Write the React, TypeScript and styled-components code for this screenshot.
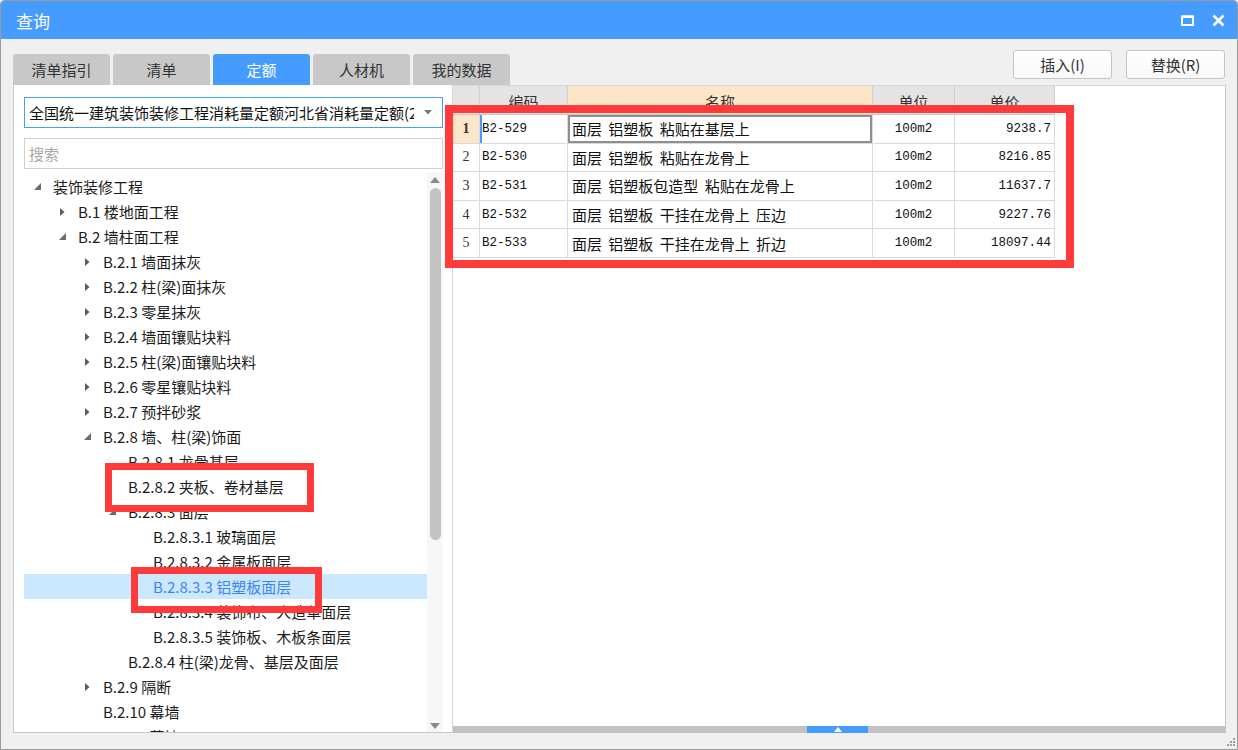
import React from "react";
import styled, { createGlobalStyle } from "styled-components";

const GlobalStyle = createGlobalStyle`
  html, body { margin: 0; padding: 0; background: #fff; }
  body { font-family: "Noto Sans CJK SC", "Liberation Sans", sans-serif; }
  * { box-sizing: border-box; }
`;

const BLUE = "#469bff";
const CJK = `"Noto Sans CJK SC", "Liberation Sans", sans-serif`;

const Window = styled.div`
  position: relative;
  width: 1238px;
  height: 750px;
  background: #f0f0f0;
  border: 1px solid #9a9a9a;
  border-radius: 4px 4px 0 0;
  display: flex;
  flex-direction: column;
  overflow: hidden;
  font-family: ${CJK};
`;

const TitleBar = styled.div`
  height: 38px;
  flex-shrink: 0;
  background: ${BLUE};
  color: #fff;
  display: flex;
  align-items: center;
  padding: 0 10px 0 15px;
  font-size: 17px;
`;

const TitleText = styled.div`
  flex: 1;
`;

const TitleIcons = styled.div`
  display: flex;
  align-items: center;
  gap: 18px;
  margin-right: 2px;
`;

const Toolbar = styled.div`
  height: 46px;
  flex-shrink: 0;
  display: flex;
  padding: 0 12px;
`;

const Tabs = styled.div`
  display: flex;
  align-items: flex-end;
  gap: 3px;
  flex: 1;
`;

const Tab = styled.div<{ $active?: boolean }>`
  width: 97px;
  height: 31px;
  border-radius: 3px 3px 0 0;
  background: ${(p) => (p.$active ? BLUE : "#c8c8c8")};
  color: ${(p) => (p.$active ? "#fff" : "#333")};
  font-size: 15px;
  display: flex;
  align-items: center;
  justify-content: center;
`;

const Buttons = styled.div`
  display: flex;
  gap: 14px;
  padding-top: 11px;
`;

const Button = styled.div`
  width: 99px;
  height: 29px;
  border: 1px solid #c4c4c4;
  border-radius: 3px;
  background: linear-gradient(#ffffff, #f8f8f8);
  font-size: 15px;
  color: #333;
  display: flex;
  align-items: center;
  justify-content: center;
`;

const Main = styled.div`
  height: 648px;
  flex-shrink: 0;
  display: flex;
  padding-left: 12px;
  padding-right: 11px;
`;

const LeftPanel = styled.div`
  width: 440px;
  background: #fff;
  border-left: 1px solid #c8c8c8;
  border-bottom: 1px solid #c8c8c8;
  border-right: 1px solid #d6d6d6;
  padding: 12px 9px 0 10px;
  display: flex;
  flex-direction: column;
`;

const Combo = styled.div`
  height: 31px;
  border: 1px solid ${BLUE};
  display: flex;
  align-items: center;
  padding: 0 6px 0 4px;
  font-size: 15px;
  color: #111;
`;

const ComboText = styled.div`
  flex: 1;
  white-space: nowrap;
  overflow: hidden;
`;

const ComboArrow = styled.div`
  width: 16px;
  display: flex;
  justify-content: center;
  margin-left: 6px;
`;

const Search = styled.div`
  height: 31px;
  margin-top: 10px;
  border: 1px solid #cfcfcf;
  display: flex;
  align-items: center;
  padding-left: 4px;
  font-size: 15px;
  color: #a8a8a8;
`;

const TreeWrap = styled.div`
  flex: 1;
  margin-top: 3px;
  display: flex;
  min-height: 0;
`;

const Tree = styled.div`
  flex: 1;
  padding-top: 2px;
  overflow: hidden;
`;

const TreeRow = styled.div<{ $level: number; $selected?: boolean }>`
  height: 25px;
  display: flex;
  align-items: center;
  padding-left: ${(p) => 6 + p.$level * 25}px;
  background: ${(p) => (p.$selected ? "#cce8ff" : "transparent")};
  color: ${(p) => (p.$selected ? "#3a86f0" : "#1c1c1c")};
  font-size: 15px;
  white-space: nowrap;
`;

const Arrow = styled.div`
  width: 14px;
  height: 25px;
  margin-right: 9px;
  display: flex;
  align-items: center;
  justify-content: center;
`;

const VScroll = styled.div`
  width: 16px;
  background: #f7f7f7;
  display: flex;
  flex-direction: column;
  align-items: center;
  padding: 5px 0 3px;
`;

const VThumb = styled.div`
  width: 11px;
  height: 352px;
  margin-top: 5px;
  border-radius: 6px;
  background: #c3c3c3;
`;

const ScrollSpacer = styled.div`
  flex: 1;
`;

const RightPanel = styled.div`
  flex: 1;
  background: #fff;
  border-top: 1px solid #d6d6d6;
  border-right: 1px solid #c8c8c8;
  display: flex;
  flex-direction: column;
`;

const GridArea = styled.div`
  flex: 1;
`;

const Grid = styled.div`
  display: grid;
  grid-template-columns: 27px 88px 305px 82px 100px;
  grid-template-rows: 29px;
  grid-auto-rows: 28.6px;
  width: 602px;
`;

const HeadCell = styled.div<{ $hot?: boolean }>`
  background: ${(p) => (p.$hot ? "#fde6c8" : "#e4e4e4")};
  border-right: 1px solid #d0d0d0;
  border-bottom: 1px solid #c6c6c6;
  display: flex;
  align-items: center;
  justify-content: center;
  font-size: 15px;
  color: #333;
  padding-top: 2px;
`;

const Cell = styled.div<{ $align?: "left" | "center" | "right" }>`
  border-right: 1px solid #dadada;
  border-bottom: 1px solid #dadada;
  display: flex;
  align-items: center;
  justify-content: ${(p) =>
    p.$align === "right" ? "flex-end" : p.$align === "center" ? "center" : "flex-start"};
  padding: 0 3px 0 3px;
  white-space: nowrap;
  overflow: hidden;
`;

const NumCell = styled(Cell)<{ $current?: boolean }>`
  justify-content: center;
  background: ${(p) => (p.$current ? "#fde6c8" : "#fff")};
  font-family: "Liberation Serif", serif;
  font-size: 14px;
  font-weight: ${(p) => (p.$current ? 700 : 400)};
  color: #333;
`;

const CodeCell = styled(Cell)<{ $cursor?: boolean }>`
  font-family: "Liberation Mono", monospace;
  font-size: 12.5px;
  color: #111;
  padding-left: 2px;
  box-shadow: ${(p) => (p.$cursor ? `inset 2px 0 0 ${BLUE}` : "none")};
`;

const NameCell = styled(Cell)<{ $focus?: boolean }>`
  font-size: 15px;
  color: #111;
  word-spacing: 3px;
  padding-left: 4px;
  box-shadow: ${(p) => (p.$focus ? "inset 0 0 0 2px #8f8f8f" : "none")};
`;

const MonoCell = styled(Cell)`
  font-family: "Liberation Mono", monospace;
  font-size: 12.5px;
  color: #111;
`;

const HScroll = styled.div`
  height: 7px;
  background: #c2c2c2;
  position: relative;
  display: flex;
  flex-shrink: 0;
`;

const HThumb = styled.div`
  width: 61px;
  margin-left: 354px;
  background: ${BLUE};
  display: flex;
  align-items: center;
  justify-content: center;
`;

const BottomBar = styled.div`
  flex: 1;
  display: flex;
  justify-content: flex-end;
  align-items: flex-end;
  padding: 0 1px 2px 0;
`;

const Mark = styled.div<{ $w?: number }>`
  position: absolute;
  border: ${(p) => p.$w ?? 7}px solid #ff3a3a;
  pointer-events: none;
`;

type Node = { level: number; label: string; arrow?: "open" | "closed"; selected?: boolean };

const tree: Node[] = [
  { level: 0, label: "装饰装修工程", arrow: "open" },
  { level: 1, label: "B.1 楼地面工程", arrow: "closed" },
  { level: 1, label: "B.2 墙柱面工程", arrow: "open" },
  { level: 2, label: "B.2.1 墙面抹灰", arrow: "closed" },
  { level: 2, label: "B.2.2 柱(梁)面抹灰", arrow: "closed" },
  { level: 2, label: "B.2.3 零星抹灰", arrow: "closed" },
  { level: 2, label: "B.2.4 墙面镶贴块料", arrow: "closed" },
  { level: 2, label: "B.2.5 柱(梁)面镶贴块料", arrow: "closed" },
  { level: 2, label: "B.2.6 零星镶贴块料", arrow: "closed" },
  { level: 2, label: "B.2.7 预拌砂浆", arrow: "closed" },
  { level: 2, label: "B.2.8 墙、柱(梁)饰面", arrow: "open" },
  { level: 3, label: "B.2.8.1 龙骨基层" },
  { level: 3, label: "B.2.8.2 夹板、卷材基层" },
  { level: 3, label: "B.2.8.3 面层", arrow: "open" },
  { level: 4, label: "B.2.8.3.1 玻璃面层" },
  { level: 4, label: "B.2.8.3.2 金属板面层" },
  { level: 4, label: "B.2.8.3.3 铝塑板面层", selected: true },
  { level: 4, label: "B.2.8.3.4 装饰布、人造革面层" },
  { level: 4, label: "B.2.8.3.5 装饰板、木板条面层" },
  { level: 3, label: "B.2.8.4 柱(梁)龙骨、基层及面层" },
  { level: 2, label: "B.2.9 隔断", arrow: "closed" },
  { level: 2, label: "B.2.10 幕墙" },
  { level: 2, label: "B.2.11 幕墙" },
];

const rows = [
  { code: "B2-529", name: "面层 铝塑板 粘贴在基层上", unit: "100m2", price: "9238.7" },
  { code: "B2-530", name: "面层 铝塑板 粘贴在龙骨上", unit: "100m2", price: "8216.85" },
  { code: "B2-531", name: "面层 铝塑板包造型 粘贴在龙骨上", unit: "100m2", price: "11637.7" },
  { code: "B2-532", name: "面层 铝塑板 干挂在龙骨上 压边", unit: "100m2", price: "9227.76" },
  { code: "B2-533", name: "面层 铝塑板 干挂在龙骨上 折边", unit: "100m2", price: "18097.44" },
];

function TreeArrow({ kind }: { kind?: "open" | "closed" }) {
  if (kind === "closed")
    return (
      <svg width="8" height="10" viewBox="0 0 8 10">
        <polygon points="2,1 6.5,5 2,9" fill="#5c5c5c" />
      </svg>
    );
  if (kind === "open")
    return (
      <svg width="9" height="9" viewBox="0 0 9 9">
        <polygon points="8,1 8,8 1,8" fill="#6a6a6a" />
      </svg>
    );
  return null;
}

export default function App() {
  return (
    <>
      <GlobalStyle />
      <Window>
        <TitleBar>
          <TitleText>查询</TitleText>
          <TitleIcons>
            <svg width="13" height="11" viewBox="0 0 13 11">
              <rect x="1" y="1.5" width="11" height="8.5" fill="none" stroke="#fff" strokeWidth="2" />
              <rect x="1" y="0.5" width="11" height="2.5" fill="#fff" />
            </svg>
            <svg width="13" height="13" viewBox="0 0 13 13">
              <path d="M1.5 1.5 L11.5 11.5 M11.5 1.5 L1.5 11.5" stroke="#fff" strokeWidth="2.6" />
            </svg>
          </TitleIcons>
        </TitleBar>

        <Toolbar>
          <Tabs>
            <Tab>清单指引</Tab>
            <Tab>清单</Tab>
            <Tab $active>定额</Tab>
            <Tab>人材机</Tab>
            <Tab>我的数据</Tab>
          </Tabs>
          <Buttons>
            <Button>插入(I)</Button>
            <Button>替换(R)</Button>
          </Buttons>
        </Toolbar>

        <Main>
          <LeftPanel>
            <Combo>
              <ComboText>全国统一建筑装饰装修工程消耗量定额河北省消耗量定额(2018)</ComboText>
              <ComboArrow>
                <svg width="8" height="5" viewBox="0 0 8 5">
                  <polygon points="0,0 8,0 4,4.5" fill="#777" />
                </svg>
              </ComboArrow>
            </Combo>
            <Search>搜索</Search>
            <TreeWrap>
              <Tree>
                {tree.map((n, i) => (
                  <TreeRow key={i} $level={n.level} $selected={n.selected}>
                    <Arrow>
                      <TreeArrow kind={n.arrow} />
                    </Arrow>
                    {n.label}
                  </TreeRow>
                ))}
              </Tree>
              <VScroll>
                <svg width="10" height="6" viewBox="0 0 10 6">
                  <polygon points="0,6 10,6 5,0" fill="#8a8a8a" />
                </svg>
                <VThumb />
                <ScrollSpacer />
                <svg width="10" height="6" viewBox="0 0 10 6">
                  <polygon points="0,0 10,0 5,6" fill="#8a8a8a" />
                </svg>
              </VScroll>
            </TreeWrap>
          </LeftPanel>

          <RightPanel>
            <GridArea>
              <Grid>
                <HeadCell />
                <HeadCell>编码</HeadCell>
                <HeadCell $hot>名称</HeadCell>
                <HeadCell>单位</HeadCell>
                <HeadCell>单价</HeadCell>
                {rows.map((r, i) => (
                  <React.Fragment key={r.code}>
                    <NumCell $current={i === 0}>{i + 1}</NumCell>
                    <CodeCell $cursor={i === 0}>{r.code}</CodeCell>
                    <NameCell $focus={i === 0}>{r.name}</NameCell>
                    <MonoCell $align="center">{r.unit}</MonoCell>
                    <MonoCell $align="right">{r.price}</MonoCell>
                  </React.Fragment>
                ))}
              </Grid>
            </GridArea>
            <HScroll>
              <HThumb>
                <svg width="8" height="5" viewBox="0 0 8 5">
                  <polygon points="0,5 8,5 4,0" fill="#fff" />
                </svg>
              </HThumb>
            </HScroll>
          </RightPanel>
        </Main>

        <BottomBar>
          <svg width="10" height="10" viewBox="0 0 10 10">
            <rect x="7" y="1" width="2" height="2" fill="#a0a0a0" />
            <rect x="4" y="4" width="2" height="2" fill="#a0a0a0" />
            <rect x="7" y="4" width="2" height="2" fill="#a0a0a0" />
            <rect x="1" y="7" width="2" height="2" fill="#a0a0a0" />
            <rect x="4" y="7" width="2" height="2" fill="#a0a0a0" />
            <rect x="7" y="7" width="2" height="2" fill="#a0a0a0" />
          </svg>
        </BottomBar>

        <Mark $w={8} style={{ left: 444, top: 104, width: 629, height: 163 }} />
        <Mark style={{ left: 104, top: 462, width: 209, height: 49 }} />
        <Mark style={{ left: 130, top: 566, width: 191, height: 46 }} />
      </Window>
    </>
  );
}
